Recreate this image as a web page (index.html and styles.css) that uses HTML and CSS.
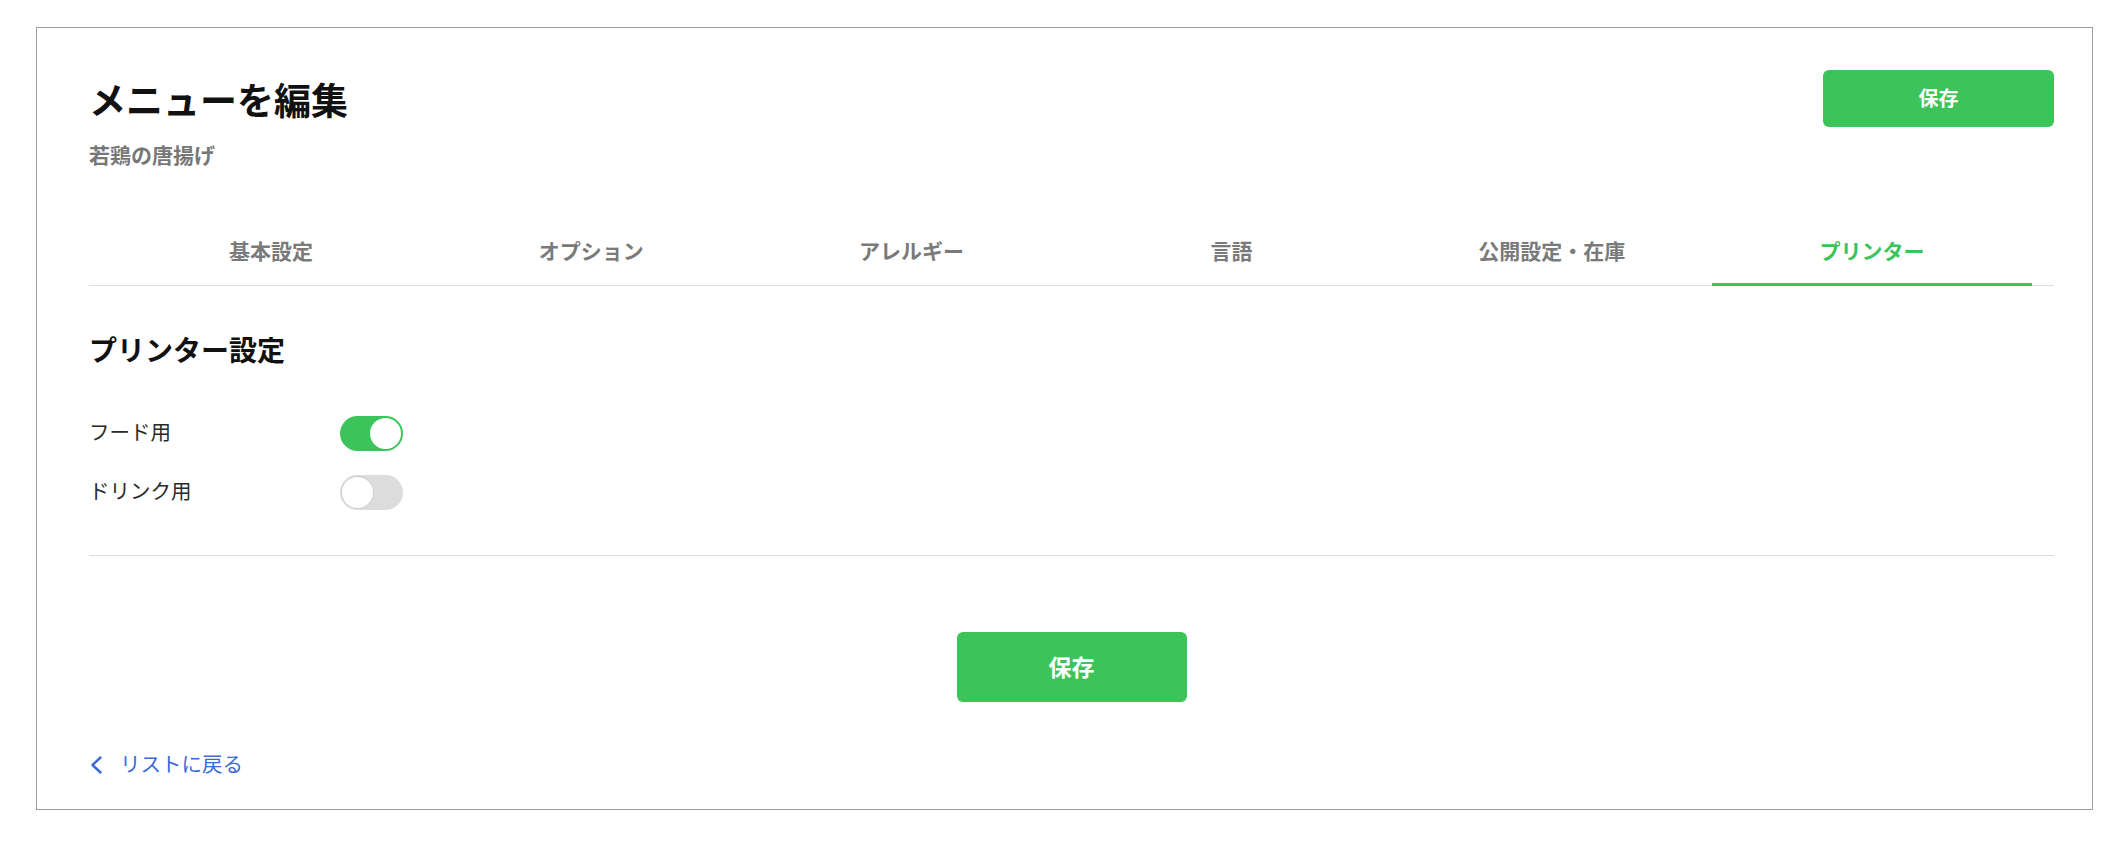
FILE: index.html
```html
<!DOCTYPE html>
<html lang="ja">
<head>
<meta charset="utf-8">
<title>メニューを編集</title>
<link rel="stylesheet" href="styles.css">
</head>
<body>
<div class="page">
  <div class="card">
    <header class="header">
      <div class="titles">
        <h1 class="title">メニューを編集</h1>
        <p class="subtitle">若鶏の唐揚げ</p>
      </div>
      <button class="btn btn-top">保存</button>
    </header>

    <nav class="tabs">
      <div class="tab">基本設定</div>
      <div class="tab">オプション</div>
      <div class="tab">アレルギー</div>
      <div class="tab">言語</div>
      <div class="tab">公開設定・在庫</div>
      <div class="tab active">プリンター</div>
    </nav>

    <section class="section">
      <h2 class="section-title">プリンター設定</h2>
      <div class="rows">
        <div class="row">
          <span class="label">フード用</span>
          <span class="toggle on"><span class="knob"></span></span>
        </div>
        <div class="row">
          <span class="label">ドリンク用</span>
          <span class="toggle"><span class="knob"></span></span>
        </div>
      </div>
    </section>

    <div class="divider"></div>

    <div class="footer-actions">
      <button class="btn btn-bottom">保存</button>
    </div>

    <a class="back" href="#">
      <svg class="chev" width="14" height="18" viewBox="0 0 14 18"><polyline points="11.5,1.5 3.5,9 11.5,16.5" fill="none" stroke="#3a6bd5" stroke-width="2.4" stroke-linecap="round" stroke-linejoin="round"/></svg>
      <span>リストに戻る</span>
    </a>
  </div>
</div>
</body>
</html>
```

FILE: styles.css
```css
* { box-sizing: border-box; }

html, body {
  margin: 0;
  padding: 0;
  background: #ffffff;
}

body {
  font-family: "Noto Sans CJK JP", "Noto Sans", sans-serif;
  color: #222;
}

.page {
  padding: 27px 31px 42px 36px;
}

.card {
  border: 1px solid #9c9c9c;
  padding: 42px 38px 28px 52px;
  min-height: 783px;
}

.header {
  display: flex;
  justify-content: space-between;
  align-items: flex-start;
}

.title {
  margin: 7px 0 0;
  font-size: 37px;
  line-height: 44px;
  font-weight: 700;
  color: #111;
}

.subtitle {
  margin: 18px 0 0;
  font-size: 21px;
  line-height: 30px;
  font-weight: 700;
  color: #777;
}

.btn {
  border: none;
  background: #3cc45a;
  color: #fff;
  font-family: inherit;
  font-weight: 700;
  border-radius: 6px;
  cursor: pointer;
}

.btn-top {
  width: 231px;
  height: 57px;
  font-size: 20px;
  padding-bottom: 3px;
}

.tabs {
  display: flex;
  margin-top: 54px;
  padding: 0 22px;
  border-bottom: 1px solid #dddddd;
}

.tab {
  flex: 1;
  text-align: center;
  font-size: 21px;
  line-height: 30px;
  font-weight: 700;
  color: #7a7a7a;
  padding: 12px 0 18px;
  border-bottom: 3px solid transparent;
  margin-bottom: -1px;
}

.tab.active {
  color: #3cc45a;
  border-bottom-color: #3cc45a;
}

.section-title {
  margin: 43px 0 0;
  font-size: 28px;
  line-height: 40px;
  font-weight: 700;
  color: #111;
}

.rows {
  margin-top: 47px;
  display: flex;
  flex-direction: column;
  gap: 24px;
}

.row {
  display: flex;
  align-items: center;
  height: 35px;
}

.label {
  width: 251px;
  font-size: 20.5px;
  line-height: 30px;
  color: #2a2a2a;
  padding-bottom: 6px;
}

.toggle {
  position: relative;
  width: 63px;
  height: 35px;
  border-radius: 18px;
  background: #dcdcdc;
}

.toggle .knob {
  position: absolute;
  top: 2px;
  left: 2px;
  width: 31px;
  height: 31px;
  border-radius: 50%;
  background: #fff;
  box-shadow: 0 0 0 1px rgba(0,0,0,0.06);
}

.toggle.on {
  background: #3cc45a;
}

.toggle.on .knob {
  left: 30px;
  box-shadow: none;
}

.divider {
  margin-top: 45px;
  height: 1px;
  background: #dddddd;
}

.footer-actions {
  display: flex;
  justify-content: center;
  margin-top: 76px;
}

.btn-bottom {
  width: 230px;
  height: 70px;
  font-size: 23px;
  padding-bottom: 4px;
}

.back {
  margin-top: 46px;
  display: inline-flex;
  align-items: center;
  gap: 17px;
  color: #3a6bd5;
  text-decoration: none;
  font-size: 20.5px;
  line-height: 30px;
}

.back span {
  padding-bottom: 3px;
}

.chev {
  display: block;
}
```
